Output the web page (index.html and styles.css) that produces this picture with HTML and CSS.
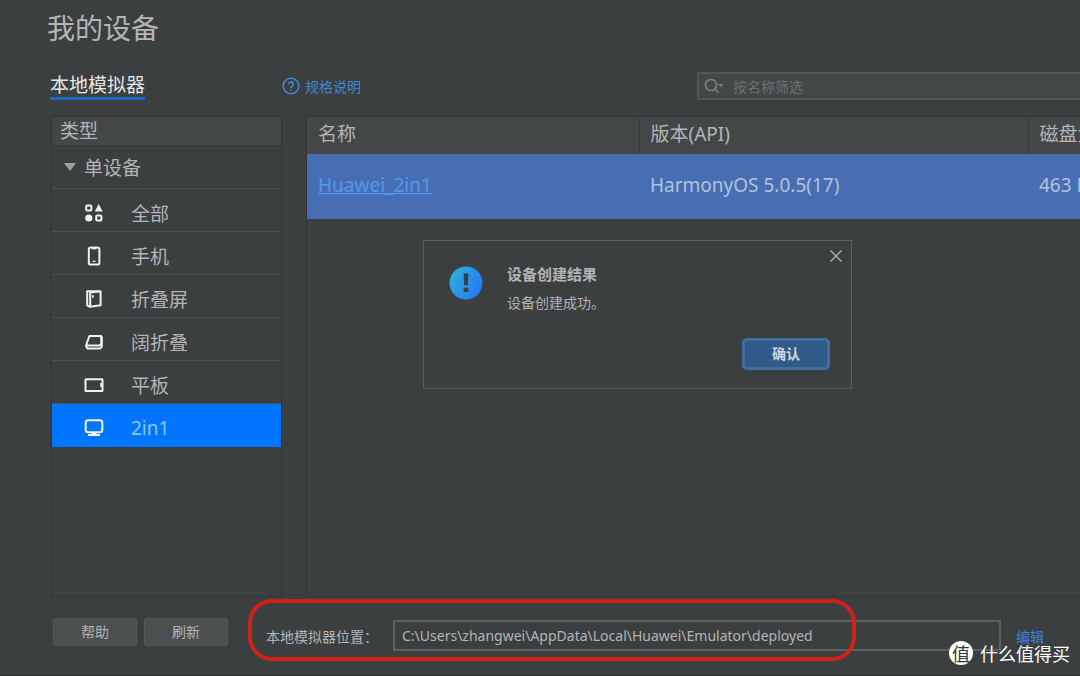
FILE: index.html
```html
<!DOCTYPE html>
<html lang="zh-CN">
<head>
<meta charset="utf-8">
<title>我的设备</title>
<link rel="stylesheet" href="styles.css">
</head>
<body>
<div class="page">
  <h1 class="title">我的设备</h1>

  <div class="toolbar">
    <div class="tabs"><button class="tab" type="button">本地模拟器</button></div>
    <a class="help" href="#">
      <svg width="18" height="18" viewBox="0 0 18 18" fill="none" stroke="currentColor" stroke-width="1.6"><circle cx="9" cy="9" r="7.8"/><path d="M6.7 7.3a2.3 2.3 0 1 1 3.5 1.9c-.8.5-1.2.9-1.2 1.7"/><path d="M9 12.2v1.6"/></svg>
      规格说明
    </a>
    <label class="search">
      <svg width="20" height="16" viewBox="0 0 20 16" fill="none" stroke="currentColor" stroke-width="1.5"><circle cx="7" cy="7" r="5.6"/><path d="M10.8 10.8l3.6 3.8"/><path d="M14 6h5.4l-2.7 3z" fill="currentColor" stroke="none"/></svg>
      <input type="text" placeholder="按名称筛选" aria-label="按名称筛选">
    </label>
  </div>

  <div class="content">
    <nav class="sidebar">
      <div class="side-head">类型</div>
      <button class="group" type="button"><svg width="12" height="8" viewBox="0 0 12 8"><path d="M0 0h12L6 8z" fill="currentColor"/></svg>单设备</button>
      <button class="item" type="button"><svg viewBox="0 0 20 20" fill="none" stroke="currentColor" stroke-width="2"><rect x="2.2" y="2.4" width="5.2" height="5.2" rx="1"/><path d="M14.7 1l4 7.4h-8z" fill="currentColor" stroke="none"/><circle cx="4.8" cy="15" r="3.6" fill="currentColor" stroke="none"/><rect x="12.2" y="12.4" width="5.2" height="5.2" rx="1"/></svg>全部</button>
      <button class="item" type="button"><svg viewBox="0 0 20 20" fill="none" stroke="currentColor" stroke-width="2"><rect x="4.8" y="1.4" width="10.6" height="17.2" rx="2.2"/><path d="M8 2.4h4.4"/><path d="M8.8 15.4h2.6" stroke-width="1.4"/></svg>手机</button>
      <button class="item" type="button"><svg viewBox="0 0 20 20" fill="none" stroke="currentColor" stroke-width="2" stroke-linejoin="round"><path d="M6.2 3.4l10.4-1.1v13.9L6.2 17.8z"/><path d="M6 17.8l-2.8-1.5V2.3h12"/><path d="M8.8 6.2v2.4" stroke-width="1.8"/></svg>折叠屏</button>
      <button class="item" type="button"><svg viewBox="0 0 20 20" fill="none" stroke="currentColor" stroke-width="2" stroke-linejoin="round"><path d="M5.4 4h11.8v8l-1.8 1.6H2z"/><path d="M2 13.6l1.2 2.8h12.8l1.8-1.6V4.4"/></svg>阔折叠</button>
      <button class="item" type="button"><svg viewBox="0 0 20 20" fill="none" stroke="currentColor" stroke-width="2"><rect x="1.5" y="4.2" width="17" height="11.8" rx=".6"/><path d="M17.2 8v4"/></svg>平板</button>
      <button class="item active" type="button"><svg viewBox="0 0 20 20" fill="none" stroke="currentColor" stroke-width="2"><rect x="1.7" y="2.3" width="16.6" height="12" rx="2.5"/><path d="M7.5 14.5h5v2.4h-5z" fill="currentColor" stroke="none"/><path d="M4 17h12"/></svg>2in1</button>
    </nav>

    <main class="devices">
      <table>
        <colgroup><col class="col-name"><col class="col-version"><col></colgroup>
        <thead><tr><th>名称</th><th>版本(API)</th><th>磁盘大小</th></tr></thead>
        <tbody><tr><td><a href="#">Huawei_2in1</a></td><td>HarmonyOS 5.0.5(17)</td><td>463 MB</td></tr></tbody>
      </table>
    </main>
  </div>

  <footer class="footer">
    <button class="btn" type="button">帮助</button>
    <button class="btn" type="button">刷新</button>
    <div class="location">
      <label for="path">本地模拟器位置：</label>
      <input id="path" type="text" value="C:\Users\zhangwei\AppData\Local\Huawei\Emulator\deployed" readonly>
      <a href="#">编辑</a>
      <div class="mark"></div>
    </div>
  </footer>
</div>

<section class="dialog" role="dialog" aria-labelledby="dialog-title">
  <svg class="info" width="34" height="34" viewBox="0 0 34 34"><defs><linearGradient id="g" x1="0" y1="0.2" x2="1" y2="0.8"><stop offset="0" stop-color="#29b4d8"/><stop offset="1" stop-color="#2873f8"/></linearGradient></defs><circle cx="17" cy="17" r="16.5" fill="url(#g)"/><path d="M14.6 7.5h4.8l-.5 11.7h-3.8zM14.7 21.8h4.6v4.2h-4.6z" fill="#3b3f41"/></svg>
  <div class="message">
    <h2 id="dialog-title">设备创建结果</h2>
    <p>设备创建成功。</p>
  </div>
  <button class="close" type="button" aria-label="关闭"><svg width="12" height="12" viewBox="0 0 12 12" stroke="currentColor" stroke-width="1.3"><path d="M.5.5l11 11M11.5.5l-11 11"/></svg></button>
  <button class="confirm" type="button">确认</button>
</section>

<div class="watermark"><span class="seal">值</span>什么值得买</div>
</body>
</html>
```
FILE: styles.css
```css
* { box-sizing: border-box; }

body {
  margin: 0;
  background: #3b3f40;
  color: #b3b5b6;
  font-family: "Noto Sans", "Noto Sans CJK SC", sans-serif;
  font-size: 19px;
  overflow: hidden;
}

button, input { font: inherit; color: inherit; }
button { border: 0; background: none; padding: 0; text-align: left; }
svg { flex: none; }

.page {
  display: flex;
  flex-direction: column;
  min-height: 100vh;
  padding-left: 51px;
  border-bottom: 1px solid #2f3233;
}

.title {
  margin: 8px 0 0 -4px;
  font-size: 28px;
  line-height: 40px;
  font-weight: 400;
}

.toolbar {
  display: grid;
  grid-template-columns: 231px 1fr 383px;
  align-items: center;
  height: 28px;
  margin: 24px 0 16px;
}

.tabs { display: flex; }

.tab {
  margin-left: -1px;
  font-size: 19px;
  line-height: 24px;
  color: #e6e7e8;
  border-bottom: 3px solid #1c66c5;
  white-space: nowrap;
}

.help {
  display: flex;
  align-items: center;
  gap: 5px;
  font-size: 14px;
  color: #4585d3;
  text-decoration: none;
}

.search {
  display: flex;
  align-items: center;
  gap: 9px;
  height: 28px;
  padding-left: 5px;
  border: 2px solid #525657;
  border-right: 0;
  border-radius: 2px 0 0 2px;
  background: #434748;
  color: #808485;
}

.search input {
  flex: 1;
  min-width: 0;
  border: 0;
  padding: 0;
  background: none;
  font-size: 14px;
  outline: 0;
}

.search input::placeholder { color: #6c7071; opacity: 1; }

.content {
  flex: 1;
  display: grid;
  grid-template-columns: 231px 1fr;
  gap: 24px;
}

.sidebar {
  display: flex;
  flex-direction: column;
  border: 1px solid #303435;
}

.side-head {
  height: 29px;
  padding-left: 8px;
  line-height: 28px;
  background: #434748;
  border-bottom: 1px solid #35393a;
}

.group, .item {
  display: flex;
  align-items: center;
  height: 43px;
  border-bottom: 1px solid #4b4f50;
}

.group {
  gap: 8px;
  padding-left: 12px;
}

.group svg { color: #a0a3a4; }

.item {
  gap: 27px;
  padding: 6px 0 0 32px;
}

.item svg {
  width: 20px;
  height: 20px;
  color: #f0f1f1;
}

.item.active {
  background: #0075ff;
  border-color: #0075ff;
  color: #94c4fa;
}

.devices {
  min-width: 0;
  overflow: hidden;
  border: 1px solid #303435;
  border-right: 0;
}

table {
  width: 100%;
  table-layout: fixed;
  border-collapse: collapse;
  white-space: nowrap;
}

.col-name { width: 332px; }
.col-version { width: 389px; }

th, td {
  padding: 0 0 3px 11px;
  text-align: left;
  font-weight: 400;
  line-height: 24px;
}

th {
  height: 37px;
  background: #434748;
}

th + th { border-left: 1px solid #35393a; }

td {
  height: 65px;
  background: #476eb3;
  color: #b1c1dc;
}

td a { color: #5597ea; }

.footer {
  display: flex;
  align-items: flex-start;
  gap: 7px;
  padding: 21px 0 24px 2px;
}

.btn {
  width: 84px;
  height: 28px;
  border: 1px solid #555859;
  border-radius: 3px;
  background: #4b4f50;
  font-size: 14px;
  line-height: 24px;
  text-align: center;
}

.location {
  position: relative;
  flex: 1;
  display: flex;
  align-items: center;
  margin: 2px 36px 0 31px;
  font-size: 14px;
}

.location label { width: 127px; white-space: nowrap; }

.location input {
  flex: 1;
  min-width: 0;
  height: 31px;
  padding: 0 7px;
  border: 2px solid #5c6061;
  background: none;
  outline: 0;
}

.location a {
  margin-left: 15px;
  color: #3f80dc;
  text-decoration: none;
}

.mark {
  position: absolute;
  inset: -21px 188px -10px -18px;
  border: 4px solid #cf2118;
  border-radius: 24px;
  pointer-events: none;
}

.dialog {
  position: absolute;
  top: 240px;
  left: 423px;
  display: grid;
  grid-template-columns: 34px 1fr auto;
  column-gap: 24px;
  width: 429px;
  height: 149px;
  padding: 22px 21px 18px 25px;
  border: 1px solid #5b5f60;
  background: #3b3f40;
}

.info { margin-top: 3px; }

.message h2 {
  margin: 0;
  font-size: 15px;
  line-height: 22px;
  font-weight: 700;
}

.message p {
  margin: 8px 0 0;
  font-size: 14px;
  line-height: 20px;
}

.close {
  position: absolute;
  top: 9px;
  right: 9px;
  display: flex;
}

.confirm {
  grid-column: 3;
  align-self: end;
  width: 88px;
  height: 32px;
  border: 3px solid #436f9f;
  border-radius: 5px;
  background: #31598a;
  color: #d0d7df;
  font-size: 14px;
  font-weight: 700;
  line-height: 24px;
  text-align: center;
}

.watermark {
  position: absolute;
  right: 10px;
  bottom: 11px;
  display: flex;
  align-items: center;
  gap: 7px;
  color: #fff;
  font-family: "Noto Sans CJK SC", sans-serif;
  font-size: 18px;
  line-height: 24px;
}

.seal {
  width: 24px;
  height: 24px;
  border-radius: 50%;
  background: #fff;
  color: #303334;
  text-align: center;
}
```
